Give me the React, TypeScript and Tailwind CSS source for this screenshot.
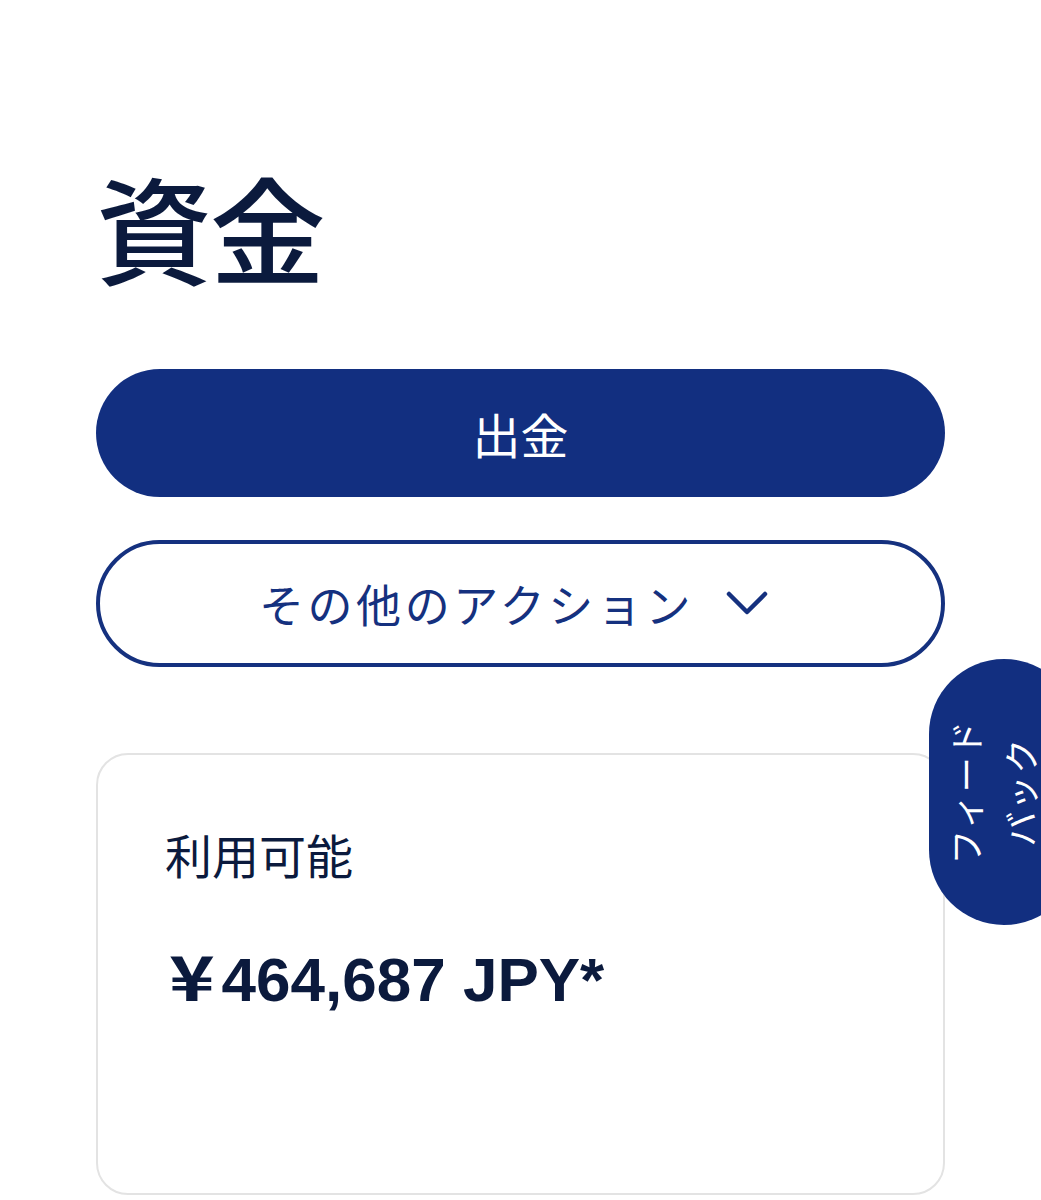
import React from 'react';

const jp = { fontFamily: '"Noto Sans CJK JP", "Noto Sans", sans-serif' };

const App = () => {
  return (
    <div className="relative min-h-[1200px] bg-white overflow-hidden" style={jp}>
      <div className="px-[96px] pt-[150px]">
        {/* Heading */}
        <h1 className="text-[116px] leading-[150px] font-medium text-[#0b1a3d] tracking-[-0.02em]">資金</h1>

        {/* Actions */}
        <div className="mt-[69px] flex flex-col gap-[43px]">
          <button className="h-[128px] w-full rounded-full bg-[#122f80] text-white text-[48px] font-normal">
            出金
          </button>
          <button className="h-[127px] w-full rounded-full border-[4px] border-[#15317f] text-[#15317f] text-[45px] flex items-center justify-center gap-[32px] pr-[14px] tracking-[0.08em]">
            <span>その他のアクション</span>
            <svg width="42" height="26" viewBox="0 0 42 26" fill="none">
              <path d="M3 3L21 21L39 3" stroke="#15317f" strokeWidth="4.5" strokeLinecap="round" strokeLinejoin="round" />
            </svg>
          </button>
        </div>

        {/* Balance card */}
        <div className="mt-[86px] h-[442px] rounded-[32px] border-2 border-[#e3e3e3] px-[67px] pt-[67px]">
          <p className="text-[47px] leading-[64px] text-[#0b1a3d]">利用可能</p>
          <p
            className="mt-[50px] text-[62px] leading-[76px] font-bold text-[#0b1a3d]"
            style={{ fontFamily: '"Liberation Sans", "Noto Sans CJK JP", sans-serif' }}
          >
            <span className="inline-block origin-left scale-x-125 ml-[4px] mr-[16px]" style={jp}>¥</span>464,687 JPY*
          </p>
        </div>
      </div>

      {/* Feedback tab */}
      <div className="absolute left-[929px] top-[659px] w-[150px] h-[266px] rounded-[75px] bg-[#122f80] flex items-center">
        <div className="w-[126px] h-full flex items-center justify-center">
          <div className="shrink-0 -rotate-90 text-white text-[35px] leading-[55px] tracking-[0.04em] whitespace-nowrap text-center">
            <div>フィード</div>
            <div>バック</div>
          </div>
        </div>
      </div>
    </div>
  );
};

export default App;
